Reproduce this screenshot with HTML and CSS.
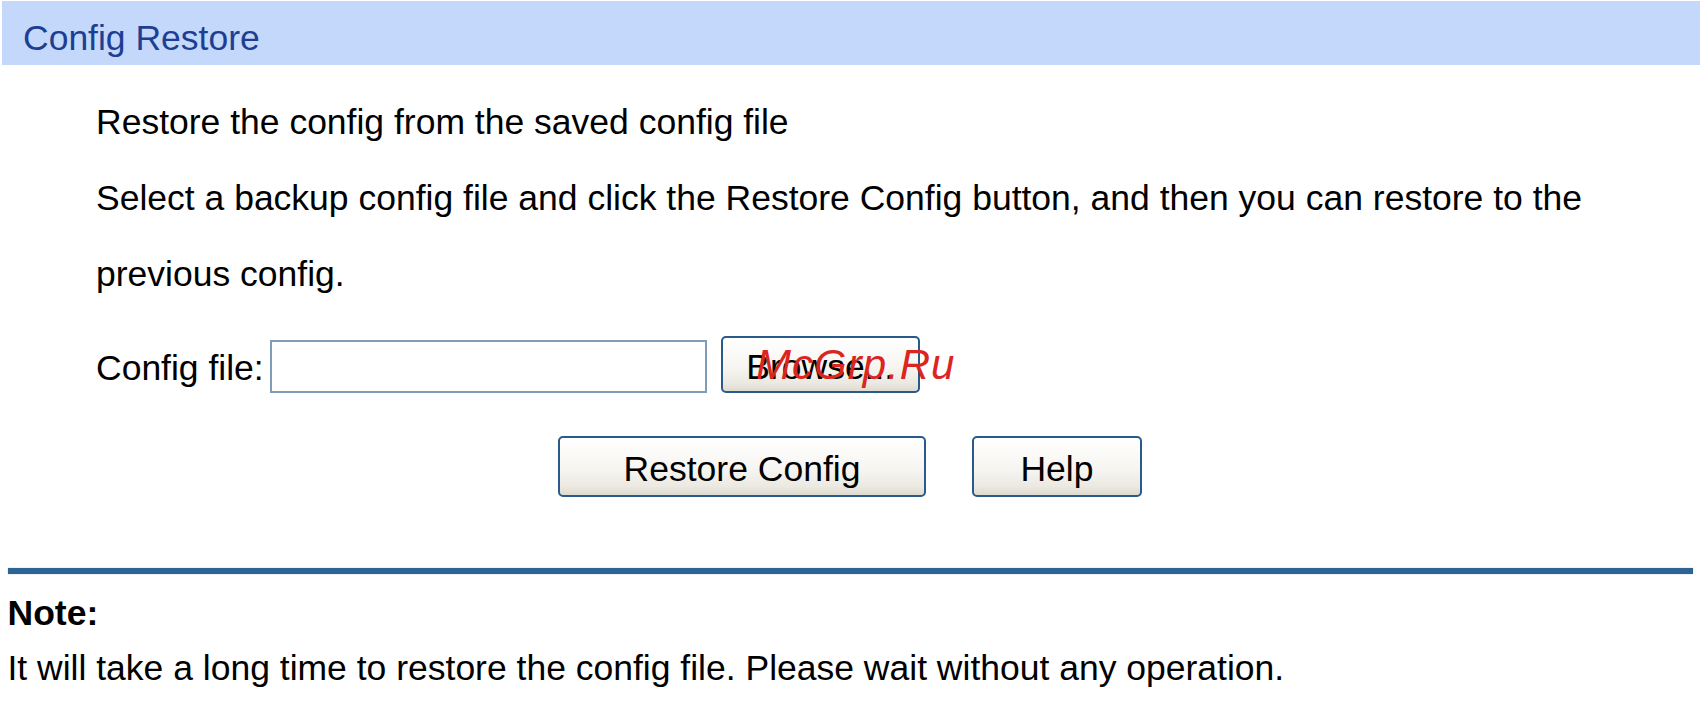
FILE: index.html
```html
<!DOCTYPE html>
<html lang="en">
<head>
<meta charset="utf-8">
<title>Config Restore</title>
<link rel="stylesheet" href="styles.css">
</head>
<body>
<div class="page">
  <div class="panel-title">Config Restore</div>
  <div class="content">
    <p class="line">Restore the config from the saved config file</p>
    <p class="line">Select a backup config file and click the Restore Config button, and then you can restore to the previous config.</p>
    <div class="file-row">
      <label class="file-label" for="cfg">Config file:</label>
      <input id="cfg" type="text" class="file-input">
      <button class="btn btn-browse" type="button">Browse...</button>
    </div>
  </div>
  <div class="actions">
    <button class="btn btn-restore" type="button">Restore Config</button>
    <button class="btn btn-help" type="button">Help</button>
  </div>
  <div class="divider"></div>
  <div class="note">
    <div class="note-title">Note:</div>
    <div class="note-text">It will take a long time to restore the config file. Please wait without any operation.</div>
  </div>
  <div class="watermark">McGrp.Ru</div>
</div>
</body>
</html>
```

FILE: styles.css
```css
html, body {
  margin: 0;
  padding: 0;
  background: #ffffff;
}

.page {
  position: relative;
  width: 1700px;
  height: 724px;
  overflow: hidden;
  font-family: "Liberation Sans", Arial, sans-serif;
  font-size: 35.5px;
  color: #000000;
}

.panel-title {
  margin: 1px 0 0 2px;
  padding: 17px 0 7px 21px;
  line-height: 40px;
  background: #c4d8fc;
  color: #1e3f91;
}

.content {
  margin-top: 19px;
  padding: 0 40px 0 96px;
}

.line {
  margin: 0;
  line-height: 76px;
}

.file-row {
  display: flex;
  align-items: flex-end;
  height: 57px;
  margin-top: 24px;
}

.file-label {
  align-self: center;
  padding-top: 6px;
  line-height: 40px;
  margin-right: 6px;
}

.file-input {
  box-sizing: border-box;
  width: 437px;
  height: 53px;
  margin: 0 14px 0 0;
  padding: 0 6px;
  border: 2px solid #7f9db9;
  background: #ffffff;
  font-family: "Liberation Sans", Arial, sans-serif;
  font-size: 35.5px;
  outline: none;
}

.btn {
  box-sizing: border-box;
  margin: 0;
  padding: 4px 0 0;
  border: 2px solid #2a5a8c;
  border-radius: 5px;
  background: linear-gradient(#ffffff 0%, #f6f5f1 55%, #ebe9e1 85%, #dedbd0 100%);
  font-family: "Liberation Sans", Arial, sans-serif;
  font-size: 35.5px;
  color: #000000;
  line-height: 40px;
}

.btn-browse {
  width: 199px;
  height: 57px;
}

.actions {
  display: flex;
  justify-content: center;
  gap: 46px;
  margin-top: 43px;
}

.btn-restore {
  width: 368px;
  height: 61px;
}

.btn-help {
  width: 170px;
  height: 61px;
}

.divider {
  height: 6px;
  margin: 71px 7px 0 7.5px;
  background: #2d6493;
  box-shadow: 0 0 1px #8fb0cc;
}

.note {
  margin-top: 19px;
  padding-left: 7.5px;
  line-height: 40px;
}

.note-title {
  font-weight: bold;
}

.note-text {
  margin-top: 15px;
}

.watermark {
  position: absolute;
  left: 756px;
  top: 344px;
  font-family: "Liberation Sans", Arial, sans-serif;
  font-style: italic;
  font-size: 42px;
  line-height: 42px;
  letter-spacing: 1px;
  color: #da2520;
  white-space: nowrap;
}
```
